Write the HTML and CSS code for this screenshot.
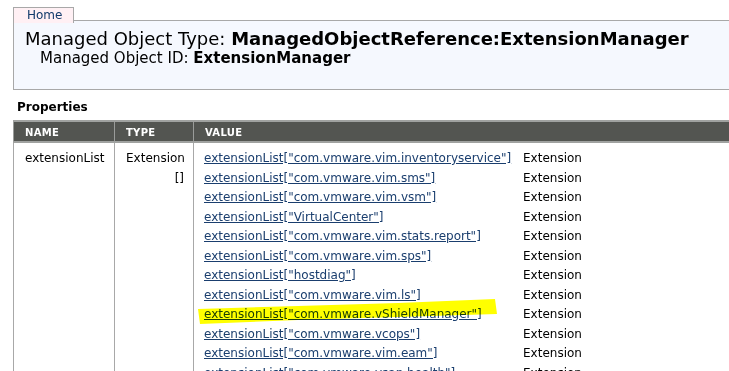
FILE: index.html
```html
<!DOCTYPE html>
<html lang="en">
<head>
    <meta charset="UTF-8">
    <title>Managed Object Browser</title>
    <link rel="stylesheet" href="styles.css">
</head>
<body>
    <!-- navegacion -->
    <div class="nav">
        <a class="tab" href="#">Home</a>
    </div>

    <!-- cabecera del objeto -->
    <div class="object-header">
        <h1>Managed Object Type: <b>ManagedObjectReference:ExtensionManager</b></h1>
        <p>Managed Object ID: <b>ExtensionManager</b></p>
    </div>

    <h2>Properties</h2>
    <table class="props">
        <thead>
            <tr>
                <th class="col-name">NAME</th>
                <th class="col-type">TYPE</th>
                <th>VALUE</th>
            </tr>
        </thead>
        <tbody>
            <tr>
                <td class="cell-name">extensionList</td>
                <td class="cell-type">Extension []</td>
                <td class="cell-value">
                    <div class="value-list">
                        <a href="#">extensionList["com.vmware.vim.inventoryservice"]</a><span>Extension</span>
                        <a href="#">extensionList["com.vmware.vim.sms"]</a><span>Extension</span>
                        <a href="#">extensionList["com.vmware.vim.vsm"]</a><span>Extension</span>
                        <a href="#">extensionList["VirtualCenter"]</a><span>Extension</span>
                        <a href="#">extensionList["com.vmware.vim.stats.report"]</a><span>Extension</span>
                        <a href="#">extensionList["com.vmware.vim.sps"]</a><span>Extension</span>
                        <a href="#">extensionList["hostdiag"]</a><span>Extension</span>
                        <a href="#">extensionList["com.vmware.vim.ls"]</a><span>Extension</span>
                        <a href="#" class="marked">extensionList["com.vmware.vShieldManager"]<svg class="highlight" viewBox="0 0 300 27" preserveAspectRatio="none"><polygon points="0,11 100,8 200,5 297,1 299,16 200,19 100,22 2,26"/></svg></a><span>Extension</span>
                        <a href="#">extensionList["com.vmware.vcops"]</a><span>Extension</span>
                        <a href="#">extensionList["com.vmware.vim.eam"]</a><span>Extension</span>
                        <a href="#">extensionList["com.vmware.vsan.health"]</a><span>Extension</span>
                    </div>
                </td>
            </tr>
        </tbody>
    </table>
</body>
</html>
```

FILE: styles.css
```css
/* Estilo general */
body {
    margin: 0;
    padding-top: 4px;
    font-family: 'DejaVu Sans', Verdana, sans-serif;
    color: #000;
    background: #fff;
    overflow: hidden;
}

.nav {
    margin-left: 13px;
    height: 16px;
}

.tab {
    display: inline-block;
    height: 15px;
    padding: 0 11px 0 13px;
    border: 1px solid #a8a8a8;
    border-bottom: none;
    background-color: #fff0f4;
    color: #123a6b;
    font-size: 12px;
    line-height: 15px;
    text-decoration: none;
}

.object-header {
    margin-left: 13px;
    height: 68px;
    border: 1px solid #a8a8a8;
    border-right: none;
    background-color: #f5f8fe;
}

.object-header h1 {
    margin: 7px 0 0 11px;
    font-size: 18px;
    font-weight: normal;
    line-height: 22px;
}

.object-header p {
    margin: 0 0 0 26px;
    font-size: 15px;
    line-height: 17px;
}

h2 {
    margin: 10px 0 5px 17px;
    font-size: 12px;
    line-height: 15px;
}

/* Tabla de propiedades */
.props {
    margin-left: 13px;
    width: calc(100% - 13px);
    border-collapse: collapse;
    table-layout: fixed;
    font-size: 12px;
}

.props th {
    height: 18px;
    padding: 1px 11px 0;
    background-color: #535551;
    border-top: 2px solid #a0a2a0;
    border-left: 1px solid #9a9c9a;
    border-bottom: 2px solid #a0a2a0;
    color: #fff;
    font-size: 10px;
    text-align: left;
    letter-spacing: 0.3px;
}

.props .col-name { width: 78px; }
.props .col-type { width: 56px; }

.props td {
    vertical-align: top;
    border-left: 1px solid #a8a8a8;
    padding: 6px 10px 0 11px;
    line-height: 19.5px;
}

.props .cell-type {
    padding-right: 9px;
    text-align: right;
}

.props .cell-value {
    padding-left: 10px;
}

.value-list {
    display: grid;
    grid-template-columns: 319px auto;
}

.value-list a {
    position: relative;
    color: #1a3e6e;
    justify-self: start;
    white-space: nowrap;
}

.value-list span {
    color: #000;
}

/* marca de resaltador */
.highlight {
    position: absolute;
    left: -6px;
    top: -7px;
    width: 300px;
    height: 27px;
    mix-blend-mode: multiply;
    pointer-events: none;
}

.highlight polygon {
    fill: #ffff00;
}
```
